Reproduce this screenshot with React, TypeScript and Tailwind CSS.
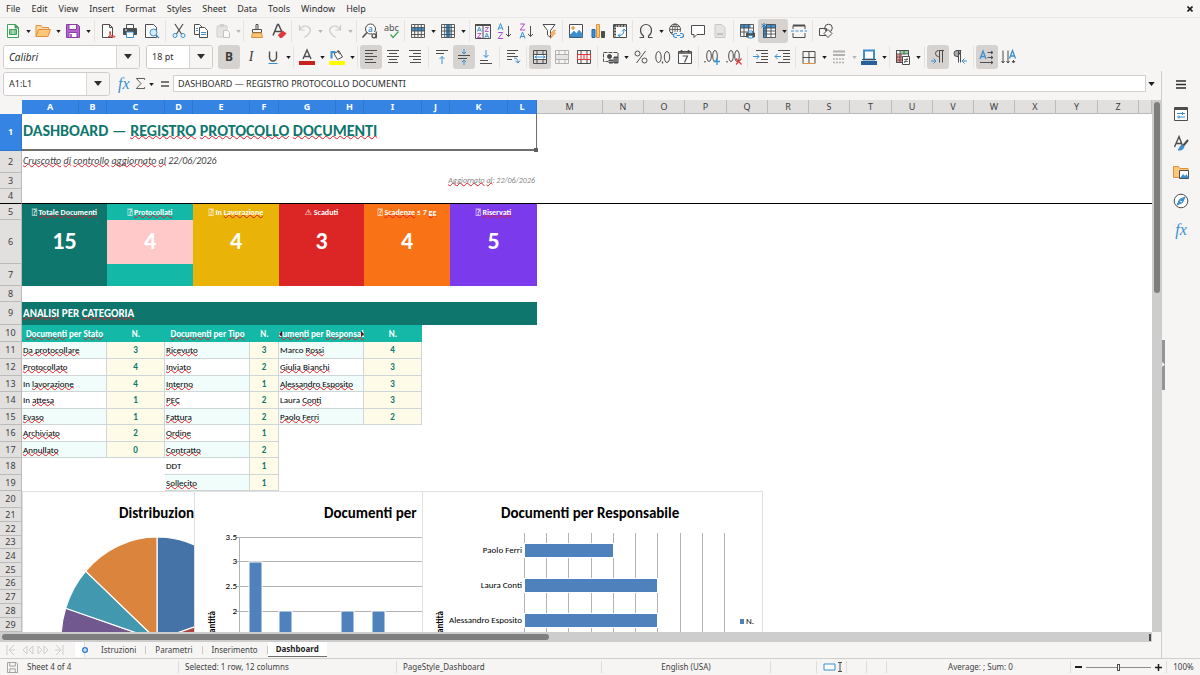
import React from "react";

type Kids = { children?: React.ReactNode };

const G = "#4d4d4d";
const B = "#3a8fd0";

/* ---------- toolbar primitives ---------- */

function Ico({ children, dim }: Kids & { dim?: boolean }) {
  return (
    <svg viewBox="0 0 16 16" width="16" height="16" fill="none" stroke={G} className={dim ? "overflow-visible opacity-40" : "overflow-visible"} aria-hidden="true">
      {children}
    </svg>
  );
}

function Caret({ dim }: { dim?: boolean }) {
  return (
    <svg viewBox="0 0 6 4" width="5" height="3" className="mt-0.5" aria-hidden="true">
      <path d="M0 0h6L3 4z" fill={dim ? "#b5b5b5" : "#1d1d1d"} />
    </svg>
  );
}

function Btn({ label, on, children }: Kids & { label: string; on?: boolean }) {
  return (
    <button type="button" aria-label={label} aria-pressed={on} className={`flex h-6 w-[22px] shrink-0 items-center justify-center rounded-[3px] ${on ? "bg-[#d5d2cf]" : "hover:bg-[#e6e4e2]"}`}>
      {children}
    </button>
  );
}

function Split({ label, on, dim, children }: Kids & { label: string; on?: boolean; dim?: boolean }) {
  return (
    <div className={`flex h-6 w-[30px] shrink-0 items-center rounded-[3px] ${on ? "bg-[#d5d2cf]" : ""}`}>
      <button type="button" aria-label={label} className="flex h-6 w-[22px] items-center justify-center">
        {children}
      </button>
      <button type="button" aria-label={label + " options"} className="flex h-6 w-2 items-center justify-center">
        <Caret dim={dim} />
      </button>
    </div>
  );
}

const Sep = () => <span className="ml-0.5 mr-0.5 h-[22px] w-px shrink-0 bg-[#e6e4e2]" />;
const SepS = () => <span className="ml-px mr-0.5 h-[22px] w-px shrink-0 bg-[#e6e4e2]" />;

function Combo({ label, value, box, text }: { label: string; value: string; box: string; text: string }) {
  return (
    <div className={`flex h-6 shrink-0 overflow-hidden rounded-[3px] border border-[#cfccc9] bg-white ${box}`}>
      <input aria-label={label} defaultValue={value} className={`min-w-0 flex-1 bg-white px-[5px] text-[#2e2e2e] outline-none ${text}`} />
      <button type="button" aria-label={label + " list"} className="flex w-[23px] items-center justify-center border-l border-[#d8d5d2] bg-[#f6f5f4]">
        <svg viewBox="0 0 8 5" width="8" height="5" aria-hidden="true">
          <path d="M0 0h8L4 5z" fill="#2e2e2e" />
        </svg>
      </button>
    </div>
  );
}

/* ---------- icon pieces ---------- */

const Lines = ({ l }: { l: [number, number, number][] }) => (
  <>
    {l.map(([x, y, w], i) => (
      <path key={i} d={`M${x} ${y + 0.5}h${w}`} />
    ))}
  </>
);
const Grid = ({ c = G }: { c?: string }) => <path d="M1.5 1.5h13v13h-13z M1.5 4.5h13 M1.5 8h13 M1.5 11.5h13 M4.7 1.5v13 M8 1.5v13 M11.3 1.5v13" stroke={c} strokeWidth=".9" />;
const T = ({ x, y, s = 8, f = G, children, w = 400 }: Kids & { x: number; y: number; s?: number; f?: string; w?: number }) => (
  <text x={x} y={y} fontSize={s} fill={f} stroke="none" fontFamily="Noto Sans, sans-serif" fontWeight={w}>
    {children}
  </text>
);

function StandardBar() {
  return (
    <div role="toolbar" aria-label="Standard" className="flex h-[26px] items-center border-t border-[#eae8e6] pl-0.5">
      <Split label="New">
        <Ico>
          <g stroke="#3fa35a"><path d="M2.5 1.5h8l3 3v10h-11z" fill="#fff" /><path d="M10 1.5v3.500h3.500z" fill="#3fa35a" /><path d="M4.500 6.500h7v5h-7z" fill="#3fa35a" /><path d="M5 8h6M5 10h6M8 7v4" stroke="#fff" strokeWidth=".7" /></g>
        </Ico>
      </Split>
      <Split label="Open">
        <Ico>
          <path d="M1 13.500v-11h5l1.500 2h6v3" stroke="#e0903c" fill="#fbd9a0" />
          <path d="M1 13.500l2.500-7h12l-2.500 7z" stroke="#e0903c" fill="#fcc776" />
        </Ico>
      </Split>
      <Split label="Save">
        <Ico>
          <path d="M1.500 1.500h11l2 2v11h-13z" stroke="#8a3fa5" fill="#b565cd" />
          <path d="M4 1.500h7.500v5h-7.500z" stroke="#8a3fa5" fill="#fff" />
          <path d="M4 9.500h8v5h-8z" stroke="#8a3fa5" fill="#fff" />
          <path d="M6 11v3" stroke="#8a3fa5" strokeWidth="1.500" />
        </Ico>
      </Split>
      <Sep />
      <Btn label="Export as PDF">
        <Ico><path d="M2.500 1.500h7l3 3v10h-10z M9.500 1.500v3h3" fill="#fff" /><path d="M7.500 14.500c2-1 3.500-3.500 3-5.500-.5-1.500-1.500 0-.5 2s2.500 3.500 5 3c.5-1.500-4-1.500-7.500.5z" stroke="#e0383c" fill="none" /></Ico>
      </Btn>
      <Btn label="Print">
        <Ico><path d="M4.500 5.500v-4h7v4" fill="#fff" /><path d="M1.500 5.500h13v6h-13z" fill={G} /><path d="M4.500 9h7v5.500h-7z" fill="#fff" stroke={B} /><path d="M3 7h2" stroke="#fff" /></Ico>
      </Btn>
      <Btn label="Print preview">
        <Ico><path d="M1.500 1.500h8l3 3v10h-11z" fill="#fff" /><circle cx="9.500" cy="9.500" r="3.500" stroke={B} fill="#d8ebf8" /><path d="M12 12l3 3" stroke={B} strokeWidth="1.300" /></Ico>
      </Btn>
      <Sep />
      <Btn label="Cut">
        <Ico><path d="M4 1l6.500 10M12 1L5.500 11" strokeWidth="1.200" /><circle cx="4" cy="12.500" r="2" stroke={B} /><circle cx="12" cy="12.500" r="2" stroke={B} /></Ico>
      </Btn>
      <Btn label="Copy">
        <Ico><path d="M1.500 1.500h5l3 3v7h-8z" fill="#fff" /><path d="M6.500 4.500h5l3 3v7h-8z" fill="#fff" /><path d="M8 9.500h5M8 11.500h5M3 5.500h2M3 7.500h2" stroke={B} /></Ico>
      </Btn>
      <Split label="Paste" dim>
        <Ico dim><path d="M2 3h10v11h-10z" fill="#ccc" stroke="#999" /><path d="M5 1.500h4v2h-4z" fill="#999" stroke="#999" /><path d="M8.500 7.500h4l2 2v5h-6z" fill="#fff" stroke="#777" /></Ico>
      </Split>
      <SepS />
      <Btn label="Clone formatting">
        <Ico><path d="M7 1.500h2v5h-2zM3.500 6.500h9v3h-9z" /><path d="M3.500 10h9l1 4.500h-11z" stroke="#e0903c" fill="#fcc776" /></Ico>
      </Btn>
      <Btn label="Clear formatting">
        <Ico><path d="M2 12.500L6.500 1.500h1L11 9M3.500 8.500h7" strokeWidth="1.500" /><path d="M7.500 12l4-4 3.500 2.500-4 4h-2z" fill="#e0383c" stroke="#e0383c" /></Ico>
      </Btn>
      <SepS />
      <Split label="Undo" dim>
        <Ico dim><path d="M2.500 2v5h5M2.500 7c2-4 6-5 9-3s2.500 6-4 10.500" stroke="#888" strokeWidth="1.200" /></Ico>
      </Split>
      <Split label="Redo" dim>
        <Ico dim><path d="M13.500 2v5h-5M13.500 7c-2-4-6-5-9-3s-2.500 6 4 10.500" stroke="#888" strokeWidth="1.200" /></Ico>
      </Split>
      <Sep />
      <Btn label="Find and replace">
        <Ico><circle cx="8.500" cy="6" r="5" fill="#fff" /><path d="M5 9.500l-4.500 5" strokeWidth="1.500" /><T x={6} y={8.500} s={8} f={B} w={600}>a</T><path d="M10 9h6v7h-6z" fill="#f6f5f4" stroke="none" /><circle cx="12" cy="12.800" r="2" strokeWidth="1.200" /><path d="M14.300 8.500v6.700" strokeWidth="1.200" /></Ico>
      </Btn>
      <Btn label="Spelling">
        <Ico><T x={0} y={7.500} s={9}>abc</T><path d="M6.500 11.500l2.500 3 5.500-6" stroke="#3fa35a" strokeWidth="1.200" /></Ico>
      </Btn>
      <SepS />
      <Split label="Row"><Ico><path d="M1.500 4.500h13v3.500h-13z" fill={B} stroke="none" /><Grid /></Ico></Split>
      <Split label="Column"><Ico><path d="M6 1.500h4.500v13h-4.500z" fill={B} stroke="none" /><Grid /></Ico></Split>
      <Sep />
      <Btn label="Sort">
        <Ico>
          <path d="M.5 1.500h15v14h-15zM8 1.500v14" /><path d="M.5 2h15" strokeWidth="2" />
          <path d="M2.300 8.500l2-4.500 2 4.500M3 7.200h2.600M9.800 14.800l2-4.500 2 4.500M10.500 13.500h2.600" stroke={B} strokeWidth=".9" />
          <path d="M2.500 10.500h3.500l-3.500 4h3.700M10 4.500h3.500l-3.500 4h3.700" stroke="#b04fc8" strokeWidth=".9" />
        </Ico>
      </Btn>
      <Btn label="Sort ascending">
        <Ico><path d="M1 7l2.500-6.500L6 7M1.800 5h3.500" stroke={B} /><path d="M1.200 9.500h4.500l-4.500 6h5" stroke="#b04fc8" /><path d="M11.500 3v10.500M9 11l2.500 2.500L14 11" /></Ico>
      </Btn>
      <Btn label="Sort descending">
        <Ico><path d="M1 15.500L3.500 9 6 15.500M1.800 13.500h3.500" stroke={B} /><path d="M1.200 1h4.500l-4.500 6h5" stroke="#b04fc8" /><path d="M11.500 3v10.500M9 11l2.500 2.500L14 11" /></Ico>
      </Btn>
      <Btn label="AutoFilter">
        <Ico><path d="M2 1.500h12l-4.500 6v7l-3-2.500v-4.500z" fill="#fff" /><path d="M13 7l-4 4.500h2.500L9.500 15.500l5-5.500H12l2.500-3z" fill="#fcc776" stroke="#e0903c" strokeWidth=".7" /></Ico>
      </Btn>
      <Sep />
      <Btn label="Insert image">
        <Ico><path d="M1.500 1.500h13v13h-13z" fill="#fff" /><path d="M2 12l4-4 2.500 2.500L11 7l3.500 4v3H2z" fill={B} stroke={B} strokeWidth=".5" /><circle cx="5" cy="5" r="1.300" fill="#fcc776" stroke="#e0903c" /></Ico>
      </Btn>
      <Btn label="Insert chart">
        <Ico><path d="M2 6.500h3v8H2z" fill={B} stroke="#2567a0" /><path d="M6.500 1.500h3v13h-3z" fill="#fcc776" stroke="#e0903c" /><path d="M11.500 8.500h3v6h-3z" fill={G} /></Ico>
      </Btn>
      <Btn label="Pivot table">
        <Ico><path d="M1.500 1.500h13v13h-13z" fill="#fff" /><path d="M1.500 3h13M3 1.500v13" strokeDasharray="2 1" strokeWidth="2" /><path d="M6.500 12.500c4 0 5.500-2 5.500-6M10 8.500L12 6l2 2M8 10.500L6 12.500l2 1.500" stroke={B} /></Ico>
      </Btn>
      <SepS />
      <Split label="Special character">
        <Ico><path d="M1.500 14.500h4v-1.500C3.500 11.500 2.500 9.500 2.500 7.200 2.500 4 5 1.500 8 1.500S13.500 4 13.500 7.200c0 2.300-1 4.300-3 5.800v1.500h4" strokeWidth="1.200" /></Ico>
      </Split>
      <Btn label="Hyperlink">
        <Ico><circle cx="7" cy="6.500" r="5.500" /><path d="M1.500 6.500h11M7 1v11M2.500 3.500h9M2.500 9.500h9" strokeWidth=".8" /><ellipse cx="7" cy="6.500" rx="2.500" ry="5.500" strokeWidth=".8" /><path d="M5 9h10v6H5z" fill="#f6f5f4" stroke="none" /><path d="M9 14.500H7.500a2 2 0 010-4H9M12 14.500h1.500a2 2 0 000-4H12M8.500 12.500h4" stroke={B} strokeWidth="1.200" /></Ico>
      </Btn>
      <Btn label="Comment"><Ico><path d="M1.500 2.500h13v9H7l-3 3v-3H1.500z" fill="#fff" /></Ico></Btn>
      <Btn label="Headers and footers"><Ico dim><path d="M3 1.500h7l3 3v10H3z" fill="#ccc" stroke="#888" /><path d="M5 11h6" stroke="#777" strokeWidth="2" /></Ico></Btn>
      <Sep />
      <Btn label="Print area">
        <Ico><path d="M1.500 1.500h10v3.500h-10z" fill={B} stroke="none" /><path d="M1.500 1.500h13v12h-13zM1.500 5h13M1.500 9h13M5 1.500v12M9.500 1.500v12" strokeWidth=".9" /><path d="M7.500 10h8v4h-8z" fill={G} /><path d="M9.500 8h4v2h-4zM9.500 12.500h4v2.500h-4z" fill="#fff" stroke={B} /></Ico>
      </Btn>
      <Split label="Freeze rows and columns" on>
        <Ico><path d="M2 4h3.500v11h-3.500zM5 1.500h10v3.500h-10z" fill={B} stroke="none" /><path d="M5.500 5.500h9v9h-9z" fill="#fff" stroke="none" /><path d="M2.500 5v9.500h12v-13h-9M5.500 1.500v13M10 1.500v13M2.500 5h12M2.500 8h12M2.500 11h12" strokeWidth=".9" /><path d="M3 0v5.500M.5 1.200l5 3M5.500 1.200l-5 3" stroke="#1f6fb5" strokeWidth=".9" /></Ico>
      </Split>
      <Btn label="Split window"><Ico><path d="M2 6V2.500h12V6M2 10v4.500h12V10" fill="none" /><path d="M2 2.500h12" strokeWidth="2" /><path d="M0 8h16" stroke={B} strokeDasharray="3 1.500" /></Ico></Btn>
      <Sep />
      <Btn label="Show draw functions"><Ico><path d="M1.500 5.500h7v7h-7z" /><circle cx="10.500" cy="5" r="3.800" /><path d="M10 6.500l4 4-4 4-4-4z" fill="#f6f5f4" /></Ico></Btn>
    </div>
  );
}

function FormatBar() {
  return (
    <div role="toolbar" aria-label="Formatting" className="flex h-[27px] items-center pl-[3px]">
      <Combo label="Font name" value="Calibri" box="w-[137px]" text="text-[10px] italic" />
      <Combo label="Font size" value="18 pt" box="ml-1.5 mr-[5px] w-[67px]" text="text-[9px]" />
      <Btn label="Bold" on><span className="text-[12px] font-bold text-[#3d3d3d]">B</span></Btn>
      <Btn label="Italic"><span className="font-['Liberation_Serif',serif] text-[14px] italic text-[#3d3d3d]">I</span></Btn>
      <Split label="Underline">
        <Ico><path d="M4.500 2.500v6a3.500 3.500 0 007 0v-6" strokeWidth="1.400" /><path d="M3.500 14.500h9" stroke={B} /></Ico>
      </Split>
      <SepS />
      <Split label="Font color">
        <Ico><path d="M4 10L8 1l4 9M5.500 7.500h5" strokeWidth="1.400" /><path d="M0 12h16v4H0z" fill="#c9211e" stroke="none" /></Ico>
      </Split>
      <Split label="Background color">
        <Ico><path d="M5 4.500l5-2.500 3.500 6-5 2.500z" fill="#fff" /><path d="M2.500 9.500V3h4" stroke={B} strokeWidth="2" /><path d="M9 1c0 2 1 4 2 4" /><path d="M0 12h16v4H0z" fill="#ffff00" stroke="none" /></Ico>
      </Split>
      <SepS />
      <Btn label="Align left" on><Ico><Lines l={[[2, 1, 12], [2, 4, 8], [2, 7, 12], [2, 10, 8], [2, 13, 11]]} /></Ico></Btn>
      <Btn label="Align center"><Ico><Lines l={[[2, 1, 12], [4, 4, 8], [2, 7, 12], [4, 10, 8], [3, 13, 10]]} /></Ico></Btn>
      <Btn label="Align right"><Ico><Lines l={[[2, 1, 12], [6, 4, 8], [2, 7, 12], [6, 10, 8], [3, 13, 11]]} /></Ico></Btn>
      <Sep />
      <Btn label="Align top"><Ico><Lines l={[[2, 1, 12], [2, 4, 8]]} /><path d="M8 15V7.500M5.500 10L8 7.500l2.500 2.500" stroke={B} /></Ico></Btn>
      <Btn label="Center vertically" on><Ico><Lines l={[[2, 6, 12], [2, 9, 9]]} /><path d="M8 0v5M6 3l2 2 2-2M8 16v-5M6 13l2-2 2 2" stroke={B} /></Ico></Btn>
      <Btn label="Align bottom"><Ico><Lines l={[[2, 11, 8], [2, 14, 12]]} /><path d="M8 1v7.500M5.500 6L8 8.500 10.500 6" stroke={B} /></Ico></Btn>
      <Sep />
      <Btn label="Wrap text"><Ico><Lines l={[[2, 1, 11], [2, 4, 8], [2, 7, 11], [2, 10, 5]]} /><path d="M9 9c3 0 4 2 4 4.500M10.500 12l2.500 2 2-2.500" stroke={B} /></Ico></Btn>
      <Sep />
      <Btn label="Merge and center" on><Ico><path d="M1.500 5.500h13v5h-13z" fill="#fff" stroke="none" /><path d="M1.500 1.500h13v13h-13zM1.500 5.500h13M1.500 10.500h13M5 1.500v4M11 1.500v4M5 10.500v4M11 10.500v4" /><path d="M2.500 8h11M5 6.500L3 8l2 1.500M11 6.500L13 8l-2 1.500" stroke={B} /></Ico></Btn>
      <Btn label="Merge cells"><Ico dim><path d="M1.500 5.500h13v5h-13z" fill="#ccc" stroke="none" /><path d="M1.500 1.500h13v13h-13zM1.500 5.500h13M1.500 10.500h13M5 1.500v4M11 1.500v4M5 10.500v4M11 10.500v4" /></Ico></Btn>
      <Btn label="Unmerge cells"><Ico><path d="M1.500 1.500h13v13h-13zM5 1.500v4M11 1.500v4M5 10.500v4M11 10.500v4" /><path d="M1.500 5.500h13v5h-13zM5 5.500v5M8 5.500v5M11 5.500v5" stroke="#e0383c" /></Ico></Btn>
      <Sep />
      <Split label="Currency"><Ico><path d="M15 8V3.500H.5v9H5" strokeDasharray="4 1" /><circle cx="6.500" cy="7.500" r="2" fill={G} /><path d="M6 11h4v3H6zM11 8h4v6h-4z" fill={G} /><path d="M11 10h4M11 12h4M6 12.500h4" stroke="#ddd" strokeWidth=".6" /></Ico></Split>
      <Btn label="Percent"><Ico><circle cx="4.500" cy="4.500" r="2.500" /><circle cx="11.500" cy="11.500" r="2.500" /><path d="M12.500 2l-9 12" /></Ico></Btn>
      <Btn label="Number"><Ico><ellipse cx="3.500" cy="8" rx="2.700" ry="5.500" /><ellipse cx="12" cy="8" rx="2.700" ry="5.500" /><path d="M7.500 12.500v2" strokeWidth="1.300" /></Ico></Btn>
      <Btn label="Date"><Ico><path d="M1.500 2.500h13v12h-13z" fill="#fff" /><path d="M1.500 4h13M4.500 1v3M11.500 1v3" strokeWidth="1.500" /><path d="M5.500 7h5l-3 6.500" strokeWidth="1.200" /></Ico></Btn>
      <Sep />
      <Btn label="Add decimal"><Ico><path d="M1 12v1.500" strokeWidth="1.300" /><ellipse cx="5" cy="7" rx="2.300" ry="5.500" /><ellipse cx="11" cy="7" rx="2.300" ry="5.500" /><path d="M13 9v7M9.500 12.500h6.500" stroke={B} strokeWidth="1.300" /></Ico></Btn>
      <Btn label="Delete decimal"><Ico><path d="M1 12v1.500" strokeWidth="1.300" /><ellipse cx="5" cy="7" rx="2.300" ry="5.500" /><ellipse cx="11" cy="7" rx="2.300" ry="5.500" /><path d="M10 9.500l5.500 6M15.500 9.500l-5.500 6" stroke="#e0383c" strokeWidth="1.200" /></Ico></Btn>
      <Sep />
      <Btn label="Increase indent"><Ico><Lines l={[[3, 1, 12], [8, 4, 7], [8, 7, 7], [8, 10, 7], [3, 13, 12]]} /><path d="M0 7.500h6M3.500 5L6 7.500 3.500 10" stroke={B} /></Ico></Btn>
      <Btn label="Decrease indent"><Ico><Lines l={[[3, 1, 12], [8, 4, 7], [8, 7, 7], [8, 10, 7], [3, 13, 12]]} /><path d="M0 7.500h6M2.500 5L0 7.500 2.500 10" stroke={B} /></Ico></Btn>
      <SepS />
      <Split label="Borders"><Ico><path d="M2 14.500V2.500h12v12M8 2.500v12M2 8.500h12" /><path d="M2 14.500h12" stroke="#e0903c" /></Ico></Split>
      <Split label="Border style" dim><Ico dim><path d="M2 2.500h12M2 6h12" strokeWidth="2" /><path d="M2 10h12M2 13.500h12" strokeDasharray="2 1" strokeWidth="1.500" /></Ico></Split>
      <Split label="Border color"><Ico><path d="M3 1.500h10v9H3z" strokeWidth="2" stroke={B} fill="#fff" /><path d="M1 10.500h14" /><path d="M0 12h16v4H0z" fill="#2a6099" stroke="none" /></Ico></Split>
      <SepS />
      <Split label="Conditional formatting"><Ico><path d="M1.500 1.500h12v12h-12z" fill="#fff" /><path d="M5 2h8v3H5z" fill="#8fd19e" stroke="none" /><path d="M2 5h5v8H2z" fill="#f08a8c" stroke="none" /><path d="M1.500 1.500h12v12h-12zM1.500 5h12M1.500 8h6M1.500 11h6M5 1.500v12M9 1.500v4" strokeWidth=".8" /><path d="M7.500 7.500h7v8h-7z" fill="#fff" /><path d="M9 10.500h4M9 12.500h4M12.500 9l-3 5" strokeWidth=".8" /></Ico></Split>
      <Sep />
      <Btn label="Left to right" on><Ico><path d="M14 1.500H8.500a3 3 0 000 6h1M9.500 1.500v12M12.500 1.500v12" /><path d="M1 12h5M3.500 9.500L6 12l-2.500 2.500" stroke={B} /></Ico></Btn>
      <Btn label="Right to left"><Ico><path d="M9 1.500H5a3 3 0 000 6h1zM6.500 1.500v12M8.500 1.500v12" fill="#aaa" /><path d="M15 12h-5M12.500 9.500L10 12l2.500 2.500" stroke={B} /></Ico></Btn>
      <Sep />
      <Btn label="Text direction horizontal" on><Ico><path d="M1 10l3-8 3 8M2 7.500h4" stroke={B} strokeWidth="1.300" /><path d="M8.500 3.500H14M8.500 8.500H14M1 13.500h13M12 2l2 1.500L12 5M12 7l2 1.500L12 10M12 12l2 1.500-2 1.500" /></Ico></Btn>
      <Btn label="Text direction vertical"><Ico><path d="M8.500 9.500l3-8 3 8M9.500 7h4" stroke={B} strokeWidth="1.300" /><path d="M2 1.500V14M7 1.500V14M12.500 11v3M.5 12L2 14l1.500-2M5.500 12L7 14l1.500-2M11 12l1.500 2 1.500-2" /></Ico></Btn>
    </div>
  );
}

/* ---------- sheet ---------- */

const Sq = ({ children }: Kids) => (
  <span className="underline decoration-[#e01b24] decoration-wavy decoration-1 underline-offset-[-1px] [text-decoration-skip-ink:none]">{children}</span>
);

/* Words wrapped in * are flagged by the spell checker. */
const spell = (s: string) => s.split("*").map((p, i) => (i % 2 ? <Sq key={i}>{p}</Sq> : <React.Fragment key={i}>{p}</React.Fragment>));

const COLS: [string, string, boolean][] = [
  ["A", "w-[57px]", true], ["B", "w-[28px]", true], ["C", "w-[58px]", true], ["D", "w-[28px]", true],
  ["E", "w-[57px]", true], ["F", "w-[29px]", true], ["G", "w-[57px]", true], ["H", "w-[28px]", true],
  ["I", "w-[58px]", true], ["J", "w-[28px]", true], ["K", "w-[58px]", true], ["L", "w-[29px]", true],
  ["M", "w-[66px]", false], ["N", "w-[41px]", false], ["O", "w-[41px]", false], ["P", "w-[42px]", false],
  ["Q", "w-[41px]", false], ["R", "w-[41px]", false], ["S", "w-[41px]", false], ["T", "w-[42px]", false],
  ["U", "w-[41px]", false], ["V", "w-[41px]", false], ["W", "w-[41px]", false], ["X", "w-[41px]", false],
  ["Y", "w-[42px]", false], ["Z", "w-[41px]", false], ["", "", false],
];

function Row({ n, h, on, freeze, children }: Kids & { n: number; h: string; on?: boolean; freeze?: boolean }) {
  return (
    <tr className={h}>
      <th
        scope="row"
        className={`overflow-hidden border-b border-r p-0 text-center align-middle font-['Noto_Sans',sans-serif] text-[9px] leading-3 ${
          on ? "border-[#2f77cc] bg-[#3584e4] font-bold text-white" : "bg-[#e1e0df] font-normal text-[#3d3d3d]"
        } ${freeze ? "border-b-black border-r-[#bbb]" : on ? "" : "border-[#bdbbb9]"}`}
      >
        {n}
      </th>
      {children}
      {freeze && <td colSpan={27} className="border-b border-black p-0" />}
    </tr>
  );
}

const KPIS = [
  { icon: "⍰", label: "*Totale Documenti*", v: 15, bg: "bg-[#0f766e]", v2: "bg-[#0f766e]" },
  { icon: "⍰", label: "*Protocollati*", v: 4, bg: "bg-[#14b8a6]", v2: "bg-[#ffc9c9]" },
  { icon: "⍰", label: "In *Lavorazione*", v: 4, bg: "bg-[#eab308]", v2: "bg-[#eab308]" },
  { icon: "⚠", label: "Scaduti", v: 3, bg: "bg-[#dc2626]", v2: "bg-[#dc2626]" },
  { icon: "⍰", label: "*Scadenze* ≤ 7 *gg*", v: 4, bg: "bg-[#f97316]", v2: "bg-[#f97316]" },
  { icon: "⍰", label: "*Riservati*", v: 5, bg: "bg-[#7c3aed]", v2: "bg-[#7c3aed]" },
];

const STATO: [string, number][] = [["*Da protocollare*", 3], ["*Protocollato*", 4], ["In *lavorazione*", 4], ["In *attesa*", 1], ["*Evaso*", 1], ["*Archiviato*", 2], ["*Annullato*", 0]];
const TIPO: [string, number][] = [["*Ricevuto*", 3], ["*Inviato*", 2], ["*Interno*", 1], ["*PEC*", 2], ["*Fattura*", 2], ["*Ordine*", 1], ["*Contratto*", 2], ["DDT", 1], ["*Sollecito*", 1]];
const RESP: [string, number][] = [["Marco *Rossi*", 4], ["*Giulia Bianchi*", 3], ["*Alessandro Esposito*", 3], ["Laura *Conti*", 3], ["*Paolo Ferri*", 2]];

const HEIGHTS = ["h-[17px]", "h-[17px]", "h-[16px]", "h-[17px]", "h-[16px]", "h-[17px]", "h-[16px]", "h-[17px]", "h-[16px]"];
const TAIL: [number, string][] = [[20, "h-[17px]"], [21, "h-[14px]"], [22, "h-[14px]"], [23, "h-[13px]"], [24, "h-[14px]"], [25, "h-[14px]"], [26, "h-[13px]"], [27, "h-[14px]"], [28, "h-[14px]"], [29, "h-[14px]"]];

function Pair({ item, odd }: { item?: [string, number]; odd: boolean }) {
  if (!item) return <><td colSpan={2} className="p-0" /><td className="p-0" /></>;
  return (
    <>
      <td colSpan={2} className={`overflow-hidden whitespace-nowrap border-b border-r border-[#cfd6d8] p-0 pl-px text-[9px] leading-3 text-black ${odd ? "bg-white" : "bg-[#f0fdfa]"}`}>{spell(item[0])}</td>
      <td className="border-b border-r border-[#cfd6d8] bg-[#fefce8] p-0 text-center text-[9px] font-bold leading-3 text-[#0f766e]">{item[1]}</td>
    </>
  );
}

/* Columns of each category table: label spans two columns, except that Stato counts sit in C and Tipo labels in D:E. */
const hd = "overflow-hidden bg-[#14b8a6] p-0 text-center text-[9px] font-bold leading-3 text-white whitespace-nowrap";

function Sheet() {
  return (
    <table className="w-full table-fixed border-separate border-spacing-0 bg-white font-[Carlito,Lato,sans-serif]">
      <colgroup>
        <col className="w-[22px]" />
        {COLS.map(([l, w]) => <col key={l} className={w} />)}
      </colgroup>
      <thead>
        <tr className="h-[14px] font-['Noto_Sans',sans-serif] text-[9px] leading-3">
          <td className="bg-[#f6f5f4] p-0" />
          {COLS.map(([l, , on]) => (
            <th key={l} scope="col" className={`border-r p-0 text-center ${on ? "border-[#2f77cc] bg-[#3584e4] font-bold text-white" : "border-b border-[#bdbbb9] bg-[#e1e0df] font-normal text-[#3d3d3d]"}`}>{l}</th>
          ))}
        </tr>
      </thead>
      <tbody>
        <Row n={1} h="h-[37px]" on>
          <td colSpan={12} className="relative border-b-2 border-r border-[#6e6e6e] p-0 pb-0.5 pl-px text-[16px] font-bold leading-5 text-[#0f766e]">
            {spell("DASHBOARD — *REGISTRO* *PROTOCOLLO* *DOCUMENTI*")}
            <span className="absolute -bottom-[3px] -right-0.5 size-1 bg-[#5e5e5e]" />
          </td>
        </Row>
        <Row n={2} h="h-[22px]">
          <td colSpan={12} className="p-0 pb-0.5 pl-px text-[10px] italic leading-3 text-[#444]">{spell("*Cruscotto* *di* *controllo* *aggiornato* *al* 22/06/2026")}</td>
        </Row>
        <Row n={3} h="h-[16px]">
          <td colSpan={12} className="p-0 pb-0.5 pr-0.5 text-right text-[8px] italic leading-3 text-[#888]">{spell("*Aggiornato* *al*: 22/06/2026")}</td>
        </Row>
        <Row n={4} h="h-[15px]" freeze />
        <Row n={5} h="h-[16px]">
          {KPIS.map((k) => (
            <td key={k.label} colSpan={2} className={`overflow-hidden whitespace-nowrap p-0 text-center text-[8px] font-bold leading-3 text-white ${k.bg}`}>
              <span className={k.icon === "⚠" ? "font-['DejaVu_Sans',sans-serif] font-normal" : "font-['DejaVu_Sans_Mono',monospace] font-normal"}>{k.icon}</span> {spell(k.label)}
            </td>
          ))}
        </Row>
        <Row n={6} h="h-[44px]">
          {KPIS.map((k) => (
            <td key={k.label} colSpan={2} className={`p-0 pb-0.5 text-center text-[24px] font-bold leading-6 text-white ${k.v2}`}>{k.v}</td>
          ))}
        </Row>
        <Row n={7} h="h-[22px]">
          {KPIS.map((k) => <td key={k.label} colSpan={2} className={`p-0 ${k.bg}`} />)}
        </Row>
        <Row n={8} h="h-[16px]" />
        <Row n={9} h="h-[23px]">
          <td colSpan={12} className="bg-[#0f766e] p-0 pl-px text-[11px] font-bold leading-4 text-white">{spell("*ANALISI* PER *CATEGORIA*")}</td>
        </Row>
        <Row n={10} h="h-[17px]">
          <td colSpan={2} className={hd}>{spell("*Documenti* per *Stato*")}</td>
          <td className={hd}>N.</td>
          <td colSpan={2} className={hd}>{spell("*Documenti* per *Tipo*")}</td>
          <td className={hd}>N.</td>
          <td colSpan={2} className={hd}>
            <div className="relative flex justify-center overflow-hidden">
              <span className="shrink-0">{spell("*Documenti* per *Responsabile*")}</span>
              <svg viewBox="0 0 3 6" width="3" height="6" className="absolute left-0 top-[3px]" aria-hidden="true"><path d="M3 0v6L0 3z" fill="#5a0d12" /></svg>
              <svg viewBox="0 0 3 6" width="3" height="6" className="absolute right-0 top-[3px]" aria-hidden="true"><path d="M0 0v6l3-3z" fill="#5a0d12" /></svg>
            </div>
          </td>
          <td className={hd}>N.</td>
        </Row>
        {HEIGHTS.map((h, i) => (
          <Row key={i} n={11 + i} h={h}>
            <Pair item={STATO[i]} odd={i % 2 === 1} />
            <Pair item={TIPO[i]} odd={i % 2 === 1} />
            <Pair item={RESP[i]} odd={i % 2 === 1} />
          </Row>
        ))}
        {TAIL.map(([n, h]) => <Row key={n} n={n} h={h} />)}
      </tbody>
    </table>
  );
}

/* ---------- charts ---------- */

const FF = "Carlito, Lato, sans-serif";

function slice(from: number, to: number) {
  const p = (d: number) => {
    const a = (d * Math.PI) / 180;
    return `${(134 + 96 * Math.sin(a)).toFixed(1)} ${(148 - 103 * Math.cos(a)).toFixed(1)}`;
  };
  return `M134 148L${p(from)}A96 103 0 0 1 ${p(to)}Z`;
}

const SLICES: [number, number, string][] = [
  [0, 72, "#4572a7"], [72, 168, "#aa4643"], [168, 264, "#89a54e"], [264, 288, "#71588f"], [288, 312, "#4198af"], [312, 360, "#db843d"],
];

function ChartTitle({ x, children }: Kids & { x: number }) {
  return <text x={x} y="26" fontSize="15" fontWeight="700" fill="#000" fontFamily={FF}>{children}</text>;
}

function PieChart() {
  return (
    <svg width="340" height="250" role="img" aria-label="Distribuzione">
      <ChartTitle x={96}>Distribuzione</ChartTitle>
      {SLICES.map(([a, b, c]) => <path key={a} d={slice(a, b)} fill={c} stroke="#fff" strokeWidth="1.200" />)}
    </svg>
  );
}

function ColumnChart() {
  const grid: [string, number][] = [["3.5", 45], ["3", 69], ["2.5", 94], ["2", 119], ["1.5", 144]];
  const bars: [number, number][] = [[54, 70], [84, 119], [146, 119], [177, 119]];
  return (
    <svg width="340" height="250" role="img" aria-label="Documenti per">
      <ChartTitle x={129}>Documenti per</ChartTitle>
      {grid.map(([l, y]) => (
        <g key={l}>
          <path d={`M41 ${y + 0.5}H320`} stroke="#b3b3b3" />
          <text x="42" y={y + 3} textAnchor="end" fontSize="9" fontFamily={FF}>{l}</text>
        </g>
      ))}
      <path d="M44.500 45v204" stroke="#b3b3b3" />
      {bars.map(([x, y]) => <rect key={x} x={x} y={y} width="13" height={250 - y} fill="#4f81bd" stroke="#fff" />)}
      <text transform="translate(20 152) rotate(-90)" fontSize="9" fontWeight="700" fontFamily={FF}>Quantità</text>
    </svg>
  );
}

function BarChart() {
  const bars: [string, number, number][] = [["Paolo Ferri", 52, 89], ["Laura Conti", 87, 133], ["Alessandro Esposito", 122, 133]];
  return (
    <svg width="339" height="250" role="img" aria-label="Documenti per Responsabile">
      <ChartTitle x={78}>Documenti per Responsabile</ChartTitle>
      {[101, 123, 145, 168, 190, 212, 234, 257, 279, 301].map((x) => <path key={x} d={`M${x + 0.5} 41v200`} stroke="#b3b3b3" />)}
      {bars.map(([l, y, w]) => (
        <g key={l}>
          <rect x="101" y={y - 1} width={w + 1} height="15" fill="#fff" />
          <rect x="102" y={y} width={w - 1} height="13" fill="#4f81bd" />
          <text x="99" y={y + 9} textAnchor="end" fontSize="9" fontFamily={FF}>{l}</text>
        </g>
      ))}
      <rect x="317" y="127" width="4" height="5" fill="#4f81bd" />
      <text x="323" y="132" fontSize="9" fontFamily={FF}>N.</text>
      <text transform="translate(20 152) rotate(-90)" fontSize="9" fontWeight="700" fontFamily={FF}>Quantità</text>
    </svg>
  );
}

/* ---------- sidebar, tabs, status ---------- */

const Fx = () => <span className="font-['Liberation_Serif',serif] text-[16px] italic leading-4 text-[#3a8fd0]">fx</span>;

function Sidebar() {
  const items: [string, React.ReactNode][] = [
    ["Sidebar settings", <Ico key="a"><path d="M3 4h10M3 7.500h10M3 11h10" stroke="#2e2e2e" strokeWidth="1.500" /></Ico>],
    ["Properties", <Ico key="b"><path d="M1.500 1.500h13v13h-13z" fill="#fff" /><path d="M1.500 3h13" strokeWidth="2" /><path d="M4 7.500h8M4 11h8" stroke={B} /><path d="M9.500 6v3M6 9.500v3" stroke={B} /></Ico>],
    ["Styles", <Ico key="c"><path d="M1.500 12L6 1.500 10 12M3 8.500h5.500" strokeWidth="1.400" /><path d="M15 5l-5 6" strokeWidth="2" /><path d="M5 15c3 .5 5.500-.5 6-3.500L9 10c-2 .5-2 3.500-4 5z" fill={B} stroke={B} /></Ico>],
    ["Gallery", <Ico key="d"><path d="M.5 13.500v-11h5l1.500 2h8v9z" fill="#fcc776" stroke="#e0903c" /><path d="M6.500 6.500h9v8h-9z" fill="#fff" /><path d="M7 14l3-4 2 2 1.500-2 2 4z" fill={B} stroke="none" /></Ico>],
    ["Navigator", <Ico key="e"><circle cx="8" cy="8" r="6.800" fill="#fff" /><path d="M12 4L9.500 9.500 4 12l2.500-5.500z" fill={B} stroke={B} /><path d="M7 8l2 1" stroke="#fff" /></Ico>],
    ["Functions", <Fx key="f" />],
  ];
  return (
    <nav aria-label="Sidebar" className="flex w-[35px] shrink-0 flex-col items-center gap-[5px] pr-[3px] pt-0.5">
      {items.map(([l, n]) => (
        <button key={l} type="button" aria-label={l} className="flex size-6 items-center justify-center">{n}</button>
      ))}
    </nav>
  );
}

function FormulaBar() {
  return (
    <div className="flex h-[25px] items-center pl-[3px]">
      <Combo label="Name box" value="A1:L1" box="w-[107px]" text="text-[9px]" />
      <button type="button" aria-label="Function wizard" className="ml-2 w-[17px] text-left"><Fx /></button>
      <button type="button" aria-label="Select function" className="flex w-[22px] items-center gap-[3px]">
        <svg viewBox="0 0 12 14" width="11" height="13" fill="none" stroke={G} aria-hidden="true"><path d="M10.500 3V1.500H1.500L6.500 7l-5 5.500h9V11" /></svg>
        <Caret />
      </button>
      <button type="button" aria-label="Formula" className="flex w-4 justify-center">
        <svg viewBox="0 0 8 6" width="8" height="6" aria-hidden="true"><path d="M0 1h8M0 5h8" stroke={G} strokeWidth="1.500" /></svg>
      </button>
      <input aria-label="Input line" defaultValue="DASHBOARD — REGISTRO PROTOCOLLO DOCUMENTI" className="h-[17px] min-w-0 flex-1 border border-[#d3d0cd] bg-white px-1 text-[9px] text-[#2e2e2e] outline-none" />
      <button type="button" aria-label="Expand formula bar" className="mr-1 flex w-[11px] justify-center">
        <svg viewBox="0 0 8 5" width="7" height="4" aria-hidden="true"><path d="M0 0h8L4 5z" fill="#1d1d1d" /></svg>
      </button>
    </div>
  );
}

function SheetTabs() {
  return (
    <div className="flex h-4 items-stretch pb-px text-[8px] text-[#3d3d3d]">
      <div className="flex w-[70px] items-center pl-1.5" aria-label="Sheet navigation">
        {["M1 1v10M8 1L3 6l5 5M3 6h6", "M6 2L2 6l4 4zM12 2L8 6l4 4z", "M2 2l4 4-4 4zM8 2l4 4-4 4z", "M12 1v10M5 1l5 5-5 5M4 6h6"].map((d) => (
          <button key={d} type="button" aria-label="Scroll sheets" className="w-[15px]">
            <svg viewBox="0 0 14 12" width="14" height="12" fill="none" stroke="#cfcdcb" aria-hidden="true"><path d={d} /></svg>
          </button>
        ))}
      </div>
      <button type="button" aria-label="Add sheet" className="ml-[5px] flex w-2.5 items-center justify-end border-r border-[#ddd] bg-white">
        <svg viewBox="0 0 6 6" width="6" height="6" aria-hidden="true" className="-mr-1"><circle cx="3" cy="3" r="3" fill="#2f78c8" /><path d="M3 1v4M1 3h4" stroke="#fff" /></svg>
      </button>
      <div role="tablist" className="ml-[7px] flex items-center">
        {["Istruzioni", "Parametri", "Inserimento"].map((t) => (
          <button key={t} role="tab" aria-selected={false} type="button" className="h-2 border-r border-[#c9c6c3] px-[9px] leading-2">{t}</button>
        ))}
        <button role="tab" aria-selected type="button" className="flex items-center self-stretch border-b border-[#6e6e6e] bg-white px-2 font-bold text-[#1d1d1d]">Dashboard</button>
      </div>
    </div>
  );
}

function StatusBar() {
  const c = "flex items-center border-r border-[#dfddda]";
  return (
    <footer className="flex h-[17px] shrink-0 items-stretch border-t border-[#d0cecb] py-0.5 text-[8px] text-[#3d3d3d]">
      <button type="button" aria-label="Save document" className="flex w-6 items-center justify-center">
        <svg viewBox="0 0 12 12" width="11" height="11" fill="none" stroke="#999" aria-hidden="true"><path d="M.5.5h9.500l1.500 1.500v9.500h-11zM3 .5v4h6v-4M3 11.500v-4h6v4" /></svg>
      </button>
      <div className={`${c} w-[155px] pl-[3px]`}>Sheet 4 of 4</div>
      <div className={`${c} w-[218px] pl-1.5`}>Selected: 1 row, 12 columns</div>
      <div className={`${c} w-[205px] pl-1.5`}>PageStyle_Dashboard</div>
      <div className={`${c} min-w-[150px] flex-1 justify-center`}>English (USA)</div>
      <div className={`${c} w-[46px]`} />
      <div className={`${c} w-[30px] gap-0.5 pl-1.5`}>
        <svg viewBox="0 0 20 12" width="20" height="12" fill="none" className="shrink-0" aria-hidden="true"><path d="M1 3h11v6H1z" stroke={B} fill="#fff" /><path d="M15 1.500h4M17 1.500v9M15 10.500h4" stroke={G} /></svg>
      </div>
      <div className={`${c} w-5`} />
      <div className={`${c} w-5`} />
      <div className={`${c} w-[184px] justify-center pl-1`}>Average: ; Sum: 0</div>
      <div className={`${c} w-24 justify-center gap-1`}>
        <button type="button" aria-label="Zoom out" className="h-0.5 w-[7px] bg-[#1d1d1d]" />
        <input
          type="range"
          aria-label="Zoom"
          className="h-2 w-[65px] appearance-none bg-[linear-gradient(#8c8c8c,#8c8c8c)] bg-[length:100%_1px] bg-center bg-no-repeat [&::-webkit-slider-thumb]:h-[7px] [&::-webkit-slider-thumb]:w-[3px] [&::-webkit-slider-thumb]:appearance-none [&::-webkit-slider-thumb]:border [&::-webkit-slider-thumb]:border-[#4d4d4d] [&::-webkit-slider-thumb]:bg-white"
        />
        <button type="button" aria-label="Zoom in" className="flex w-[7px] justify-center">
          <svg viewBox="0 0 7 7" width="7" height="7" aria-hidden="true"><path d="M0 3.500h7M3.500 0v7" stroke="#1d1d1d" strokeWidth="1.500" /></svg>
        </button>
      </div>
      <div className="flex w-[33px] items-center justify-center">100%</div>
    </footer>
  );
}

export default function App() {
  return (
    <div className="flex h-screen flex-col overflow-hidden bg-[#f6f5f4] font-['Noto_Sans',sans-serif] leading-none text-[#2e2e2e]">
      <header className="flex h-[17px] shrink-0 items-center gap-[11px] pl-1.5 pr-[7px] text-[9px]">
        {["File", "Edit", "View", "Insert", "Format", "Styles", "Sheet", "Data", "Tools", "Window", "Help"].map((m) => (
          <button key={m} type="button">{m}</button>
        ))}
        <button type="button" aria-label="Close document" className="ml-auto">
          <svg viewBox="0 0 6 6" width="6" height="6" aria-hidden="true"><path d="M.5.5l5 5M5.500.5l-5 5" stroke="#1d1d1d" strokeWidth="1.600" /></svg>
        </button>
      </header>
      <StandardBar />
      <FormatBar />
      <div className="flex min-h-0 flex-1 pt-px">
        <div className="flex min-w-0 flex-1 flex-col">
          <FormulaBar />
          <div className="mt-1 flex min-h-0 flex-1">
            <div className="flex min-w-0 flex-1 flex-col">
              <div className="relative min-h-0 flex-1 overflow-hidden bg-white">
                <Sheet />
                <div className="absolute left-[22px] top-[391px] border border-[#e0e0e0] bg-white"><PieChart /></div>
                <div className="absolute left-[194px] top-[391px] border border-[#e0e0e0] bg-white"><ColumnChart /></div>
                <div className="absolute left-[422px] top-[391px] border border-[#e0e0e0] bg-white"><BarChart /></div>
              </div>
              <div className="flex h-2.5 shrink-0 items-center justify-between bg-[#cdcdcd] pl-0.5">
                <div className="h-1.5 w-[47.6%] rounded-full bg-[#7e7e7e]" />
                <div className="mr-px h-[7px] w-0.5 bg-[#4d4d4d]" />
              </div>
            </div>
            <div className="mb-2.5 w-[9px] shrink-0 bg-[#cdcdcd] px-px pt-0.5">
              <div className="mx-auto h-[36%] w-[6px] rounded-full bg-[#7e7e7e]" />
            </div>
          </div>
          <SheetTabs />
        </div>
        <div className="flex w-1 shrink-0 items-center border-l border-[#cfcdcb]">
          <button type="button" aria-label="Hide sidebar" className="flex h-[50px] w-1 items-center bg-[#959595]">
            <svg viewBox="0 0 3 6" width="3" height="5" aria-hidden="true"><path d="M0 0v6l3-3z" fill="#fff" /></svg>
          </button>
        </div>
        <Sidebar />
      </div>
      <StatusBar />
    </div>
  );
}
